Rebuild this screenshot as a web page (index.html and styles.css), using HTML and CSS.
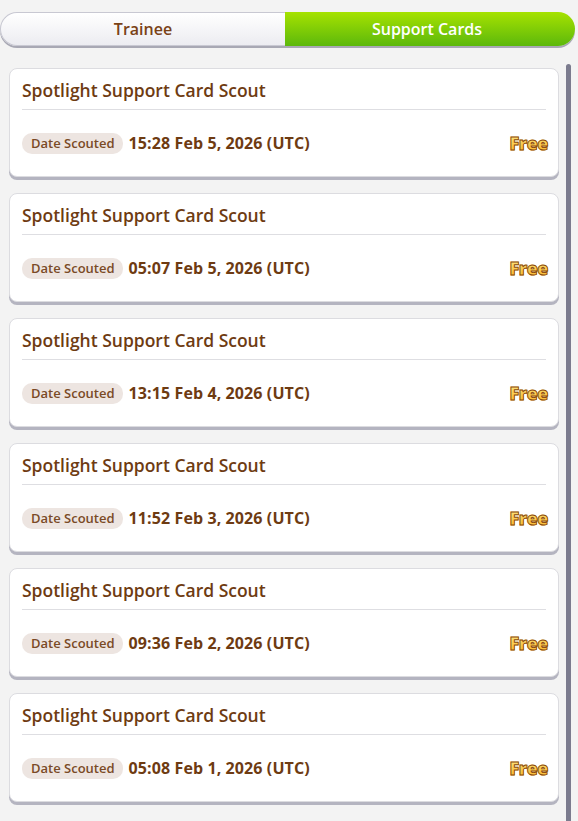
FILE: index.html
```html
<!DOCTYPE html>
<html lang="en">
<head>
  <meta charset="UTF-8">
  <title>Scout History</title>
  <link rel="stylesheet" href="styles.css">
</head>
<body>

<div class="tabs">
  <div class="tab">Trainee</div>
  <div class="tab active">Support Cards</div>
</div>

<div class="list-wrap">
  <div class="list">
    <div class="card">
      <div class="card-title">Spotlight Support Card Scout</div>
      <div class="card-row">
        <span class="tag">Date Scouted</span>
        <span class="date">15:28 Feb 5, 2026 (UTC)</span>
        <span class="free">Free</span>
      </div>
    </div>
    <div class="card">
      <div class="card-title">Spotlight Support Card Scout</div>
      <div class="card-row">
        <span class="tag">Date Scouted</span>
        <span class="date">05:07 Feb 5, 2026 (UTC)</span>
        <span class="free">Free</span>
      </div>
    </div>
    <div class="card">
      <div class="card-title">Spotlight Support Card Scout</div>
      <div class="card-row">
        <span class="tag">Date Scouted</span>
        <span class="date">13:15 Feb 4, 2026 (UTC)</span>
        <span class="free">Free</span>
      </div>
    </div>
    <div class="card">
      <div class="card-title">Spotlight Support Card Scout</div>
      <div class="card-row">
        <span class="tag">Date Scouted</span>
        <span class="date">11:52 Feb 3, 2026 (UTC)</span>
        <span class="free">Free</span>
      </div>
    </div>
    <div class="card">
      <div class="card-title">Spotlight Support Card Scout</div>
      <div class="card-row">
        <span class="tag">Date Scouted</span>
        <span class="date">09:36 Feb 2, 2026 (UTC)</span>
        <span class="free">Free</span>
      </div>
    </div>
    <div class="card">
      <div class="card-title">Spotlight Support Card Scout</div>
      <div class="card-row">
        <span class="tag">Date Scouted</span>
        <span class="date">05:08 Feb 1, 2026 (UTC)</span>
        <span class="free">Free</span>
      </div>
    </div>
  </div>
  <div class="scrollbar"></div>
</div>

</body>
</html>
```

FILE: styles.css
```css
body { margin: 0; background: #f3f3f3; font-family: "Open Sans", sans-serif; height: 821px; overflow: hidden; }

.tabs { display: flex; margin: 12px 3px 0 0; height: 34px; border-radius: 17px; box-shadow: 0 2px 0 #a8a8b4; }
.tab { flex: 1; display: flex; align-items: center; justify-content: center; font-size: 16px; font-weight: 600; color: #7a4216; background: linear-gradient(#ffffff, #ececf1); border: 1px solid #c8c8d2; border-right: none; border-radius: 17px 0 0 17px; }
.tab.active { color: #fff; padding-right: 6px; background: linear-gradient(#a6e200, #5cb80c); border: none; border-radius: 0 17px 17px 0; }

.list-wrap { display: flex; margin-top: 18px; }
.list { flex: 1; display: flex; flex-direction: column; gap: 16px; padding: 4px 7px 0 9px; }
.scrollbar { width: 5px; background: #7b7b8e; border-radius: 3px; margin-right: 7px; height: 760px; }

.card { background: #fff; border: 1px solid #dcdce0; border-radius: 8px; box-shadow: 0 3px 0 #b4b4c0; padding: 9px 12px 14px 12px; height: 84px; }
.card-title { font-size: 17.5px; font-weight: 600; color: #6e3b12; padding-bottom: 7px; border-bottom: 1px solid #dedee2; }
.card-row { display: flex; align-items: center; margin-top: 21px; }
.tag { background: #ede5e1; color: #7a4a26; font-size: 13px; font-weight: 600; border-radius: 10px; padding: 1px 8px 2px 9px; }
.date { margin-left: 6px; font-size: 16px; font-weight: 700; letter-spacing: 0.1px; color: #6e3b12; }
.free { margin-left: auto; margin-right: -2px; font-size: 18px; font-weight: 800; background: linear-gradient(#fff08e, #f7ae20); -webkit-background-clip: text; -webkit-text-fill-color: transparent; -webkit-text-stroke: 0.9px #8a4a10; letter-spacing: -0.5px; }
```
